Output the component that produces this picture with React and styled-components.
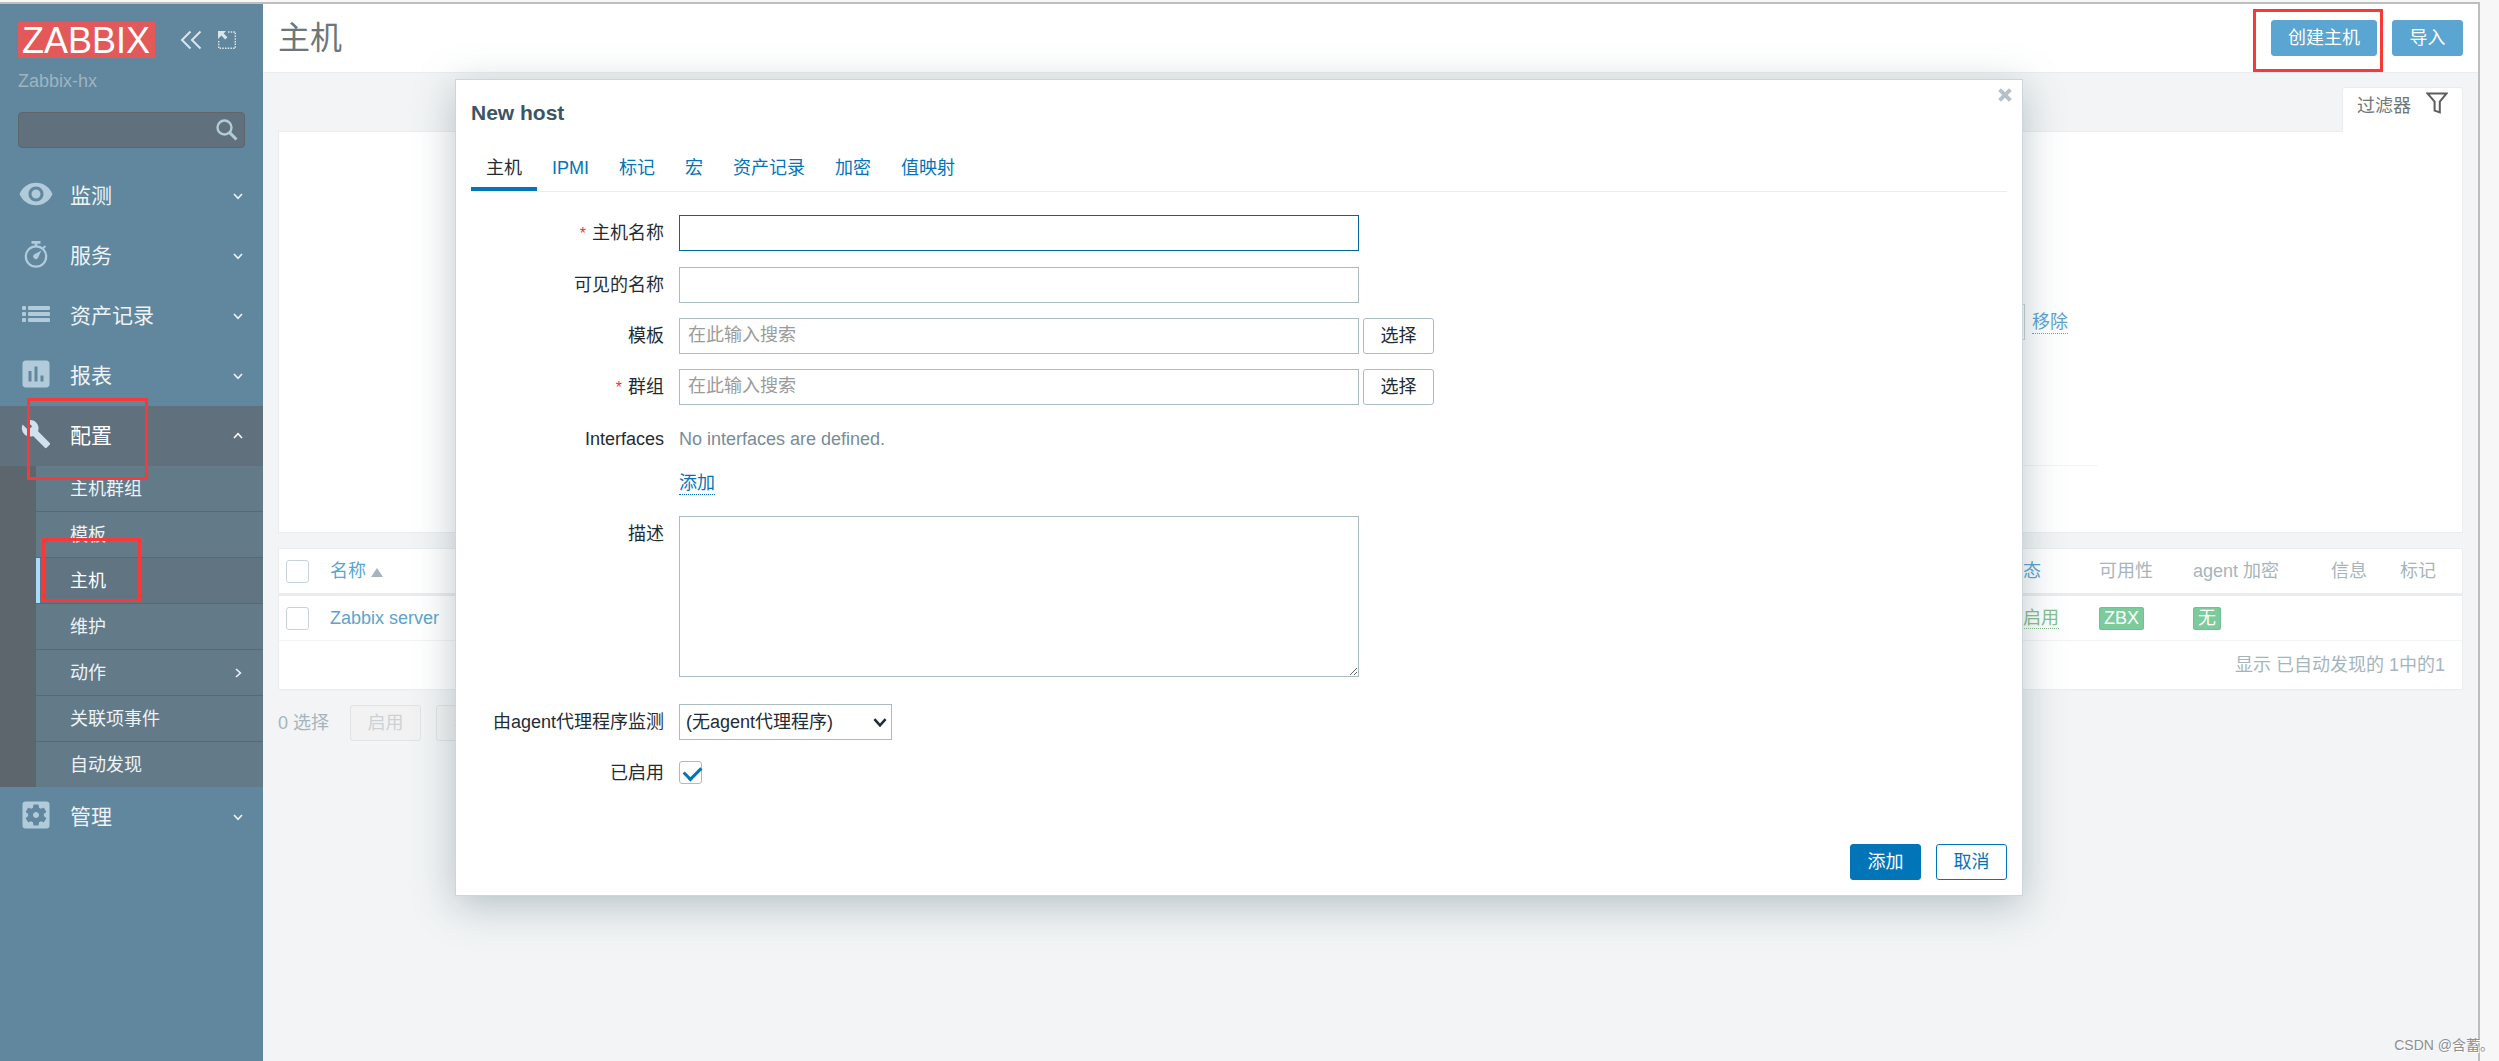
import React from 'react';
import styled, { createGlobalStyle, css } from 'styled-components';
import {
  MdVisibility,
  MdAssessment,
  MdSettingsApplications,
} from 'react-icons/md';

const GlobalStyle = createGlobalStyle`
  * {
    box-sizing: border-box;
  }

  body {
    margin: 0;
    background: #f7f7f7;
    color: #1f2c33;
    font-family: "Liberation Sans", "Noto Sans CJK SC", sans-serif;
    font-size: 18px;
    line-height: 24px;
  }

  button, input, select, textarea {
    font: inherit;
  }

  a {
    text-decoration: none;
  }
`;

const Frame = styled.div`
  position: relative;
  display: flex;
  min-height: calc(100vh - 2px);
  margin: 2px 19px 0 0;
  border-top: 2px solid #bebebe;
  border-right: 2px solid #bebebe;
  background: #f2f4f5;
`;

/* red outline drawn around its positioned parent */
const Marker = styled.span`
  position: absolute;
  z-index: 1;
  top: ${props => props.$top}px;
  left: ${props => props.$left}px;
  width: ${props => props.$width}px;
  height: ${props => props.$height}px;
  border: 3px solid #fb3838;
  pointer-events: none;
`;

/* sidebar */

const Sidebar = styled.aside`
  flex: 0 0 263px;
  min-width: 0;
  padding-top: 18px;
  background: #60879e;
`;

const SidebarTop = styled.div`
  padding: 0 18px;
`;

const LogoRow = styled.div`
  display: flex;
  align-items: center;
`;

const Logo = styled.a`
  width: 137px;
  height: 36px;
  padding-left: 4px;
  background: #e35959;
  color: #fff;
  font-size: 36px;
  line-height: 37px;
`;

const IconButton = styled.button`
  display: flex;
  margin-left: ${props => props.$gap}px;
  padding: 0;
  border: 0;
  background: none;
  color: #dbe6ec;
`;

const ServerName = styled.div`
  margin-top: 12px;
  line-height: 22px;
  color: #9db5c2;
`;

const SearchBox = styled.div`
  display: flex;
  align-items: center;
  height: 36px;
  margin: 20px 0 18px;
  padding-right: 6px;
  border: 1px solid #5d666c;
  border-radius: 4px;
  background: #60717d;
`;

const SearchInput = styled.input`
  flex: 1;
  min-width: 0;
  height: 34px;
  padding: 0 8px;
  border: 0;
  outline: 0;
  background: none;
  color: #fff;
`;

const MenuList = styled.ul`
  margin: 0;
  padding: 0;
  list-style: none;
`;

const MenuItem = styled.li`
  position: relative;
`;

const MenuButton = styled.button`
  display: flex;
  align-items: center;
  width: 100%;
  height: 60px;
  padding: 0 20px 0 18px;
  border: 0;
  background: ${props => (props.$open ? '#60717d' : 'none')};
  color: ${props => (props.$open ? '#fff' : '#edf3f6')};
  font-size: 21px;
  text-align: left;
`;

const MenuIcon = styled.span`
  display: flex;
  margin-right: 16px;
  padding-bottom: 4px;
  color: ${props => (props.$open ? '#d0e2ef' : '#b1cbdb')};
`;

const MenuText = styled.span`
  flex: 1;
`;

const SubMenu = styled(MenuList)`
  padding-left: 36px;
  background: #5d666c;
`;

const SubItem = styled(MenuItem)`
  border-top: 1px solid #566a76;

  &:first-child {
    border-top: 0;
  }
`;

const SubLink = styled.a`
  display: flex;
  align-items: center;
  height: 45px;
  padding: 0 20px 0 34px;
  background: #637a89;
  color: #edf3f6;

  ${props => props.$selected && css`
    padding-left: 30px;
    border-left: 4px solid #a8dcff;
    background: #607482;
    color: #fff;
  `}
`;

/* page */

const Main = styled.main`
  flex: 1;
  min-width: 0;
`;

const Header = styled.header`
  display: flex;
  align-items: flex-start;
  justify-content: space-between;
  height: 69px;
  padding: 16px 15px 0;
  border-bottom: 1px solid #eaedef;
  background: #fff;
`;

const Title = styled.h1`
  margin: 0;
  color: #6d767a;
  font-size: 32px;
  font-weight: normal;
  line-height: 36px;
`;

const ButtonRow = styled.div`
  display: flex;
  align-items: center;
  gap: 15px;
`;

const Anchor = styled.div`
  position: relative;
`;

const looks = {
  faded: css`
    border-color: #5aa5d1;
    background: #5aa5d1;
    color: #fff;
  `,
  primary: css`
    border-color: #0275b8;
    background: #0275b8;
    color: #fff;
  `,
  outline: css`
    border-color: #0275b8;
    background: #fff;
    color: #0275b8;
  `,
  plain: css`
    border-color: #acbbc2;
    background: #fff;
    color: #1f2c33;
  `,
  disabled: css`
    border-color: #dfe4e7;
    background: #f2f2f2;
    color: #cbd2d6;
  `,
};

const Button = styled.button`
  display: block;
  min-width: 71px;
  height: 36px;
  padding: 0 16px;
  border: 1px solid;
  border-radius: 3px;
  line-height: 32px;
  white-space: nowrap;
  ${props => looks[props.$look]}
`;

const Content = styled.div`
  padding: 14px 15px;
`;

const FilterTab = styled.button`
  position: relative;
  display: flex;
  gap: 15px;
  height: 45px;
  margin: 0 0 -1px auto;
  padding: 4px 14px 0;
  border: 1px solid #eaedef;
  border-bottom: 0;
  border-radius: 3px 3px 0 0;
  background: #fff;
  color: #6d767a;
  line-height: 28px;
`;

const FilterPanel = styled.section`
  padding: 172px 0 66px;
  border: 1px solid #eaedef;
  background: #fff;
`;

const FilterForm = styled.div`
  max-width: 1455px;
  margin: 0 auto;
  border-bottom: 1px solid #f2f4f5;
`;

const TagRow = styled.div`
  display: flex;
  align-items: center;
  justify-content: flex-end;
  gap: 7px;
  padding: 0 30px 125px 0;
`;

const TagInput = styled.input`
  width: 300px;
  height: 36px;
  border: 1px solid #c9d3d7;
  background: #fff;
`;

const colours = {
  link: '#0275b8',
  faded: '#5aa5d1',
  green: '#84c088',
};

const DottedLink = styled.a`
  border-bottom: 1px dotted;
  color: ${props => colours[props.$colour]};
  line-height: 22px;
`;

const HostTable = styled.table`
  width: 100%;
  margin-top: 15px;
  border: 1px solid #eaedef;
  border-spacing: 0;
  background: #fff;
  table-layout: fixed;
`;

const Th = styled.th`
  width: ${props => (props.$width ? `${props.$width}px` : 'auto')};
  height: 47px;
  padding: 0 6px;
  border-bottom: 3px solid #eaedef;
  color: #a6b5bd;
  font-weight: normal;
  text-align: left;
  white-space: nowrap;
`;

const Td = styled.td`
  height: 45px;
  padding: 0 6px;
  border-bottom: 1px solid #f2f4f5;
  color: #a6b5bd;
`;

const TableFooter = styled.td`
  height: 48px;
  padding: 0 17px;
  color: #a6b5bd;
  text-align: right;
`;

const TableLink = styled.a`
  color: #5aa5d1;
`;

const SortArrow = styled.span`
  display: inline-block;
  margin-left: 5px;
  border: 6px solid transparent;
  border-top: 0;
  border-bottom: 9px solid #a6b5bd;
`;

const Badge = styled.span`
  display: inline-block;
  height: 23px;
  padding: 0 5px;
  border-radius: 3px;
  box-shadow: inset 0 0 0 1px #72c094;
  background: #7bcb9c;
  color: #fff;
  line-height: 23px;
  vertical-align: middle;
`;

const CheckBox = styled.input`
  display: block;
  width: 23px;
  height: 23px;
  margin: ${props => (props.$inTable ? '0 1px' : '6px 0 0')};
  border: 1px solid ${props => (props.$inTable ? '#c9d3d7' : '#acbbc2')};
  border-radius: 3px;
  background: #fff;
  appearance: none;

  /* the tick */
  &:checked::after {
    content: '';
    display: block;
    width: 14px;
    height: 8px;
    margin: 4px 0 0 4px;
    border: solid #0275b8;
    border-width: 0 0 3px 3px;
    transform: rotate(-45deg);
  }
`;

const Actions = styled.div`
  display: flex;
  align-items: center;
  gap: 15px;
  margin-top: 15px;
`;

const SelectedCount = styled.span`
  margin-right: 6px;
  color: #a6b5bd;
`;

/* dialog */

const Overlay = styled.div`
  position: absolute;
  inset: 0;
  display: flex;
  align-items: flex-start;
  justify-content: center;
  padding: 75px 16px;
  pointer-events: none;
`;

const Dialog = styled.section`
  position: relative;
  width: 100%;
  max-width: 1568px;
  padding: 21px 15px 15px;
  border: 1px solid #ccd5d9;
  box-shadow: 0 9px 38px rgba(65, 95, 110, 0.35);
  background: #fff;
  pointer-events: auto;
`;

const CloseButton = styled.button`
  position: absolute;
  top: 8px;
  right: 10px;
  display: flex;
  padding: 0;
  border: 0;
  background: none;
  color: #b5c2c8;
`;

const DialogTitle = styled.h2`
  margin: 0;
  color: #3c5563;
  font-size: 21px;
  line-height: 24px;
`;

const Tabs = styled.nav`
  display: flex;
  margin: 20px 0 23px;
  border-bottom: 1px solid #ebeef0;
`;

const Tab = styled.a`
  padding: 0 15px;
  color: #0275b8;
  line-height: 46px;

  ${props => props.$active && css`
    box-shadow: inset 0 -4px #0275b8;
    color: #1f2c33;
  `}
`;

const FormGrid = styled.form`
  display: grid;
  grid-template-columns: 193px minmax(0, 1fr);
  gap: 15px;
`;

const Label = styled.label`
  line-height: 36px;
  text-align: right;
  white-space: nowrap;
`;

const Required = styled.span`
  margin-right: 6px;
  color: #e33734;
  font-size: 16px;
`;

const Field = styled.div`
  display: flex;
  gap: 4px;
`;

const TextInput = styled.input`
  width: 680px;
  height: 36px;
  padding: 0 8px 2px;
  border: 1px solid ${props => (props.$current ? '#02659f' : '#acbbc2')};
  outline: 0;
  background: #fff;

  &::placeholder {
    color: #9b9b9b;
  }
`;

const TextArea = styled.textarea`
  display: block;
  width: 680px;
  height: 161px;
  margin-bottom: 12px;
  border: 1px solid #acbbc2;
  outline: 0;
`;

const Interfaces = styled.div`
  display: grid;
  justify-items: start;
  gap: 8px;
`;

const Note = styled.span`
  color: #768d99;
  line-height: 36px;
`;

const LinkLine = styled.div`
  display: flex;
  align-items: center;
  height: 36px;
`;

const SelectBox = styled.div`
  position: relative;
  width: 213px;
`;

const Select = styled.select`
  width: 100%;
  height: 36px;
  padding: 0 30px 0 6px;
  border: 1px solid #acbbc2;
  background: #fff;
  color: #1f2c33;
  appearance: none;
`;

const SelectArrow = styled.span`
  position: absolute;
  top: 11px;
  right: 5px;
  display: flex;
  color: #1f2c33;
  pointer-events: none;
`;

const DialogFooter = styled.footer`
  display: flex;
  justify-content: flex-end;
  gap: 15px;
  margin-top: 53px;
`;

const Watermark = styled.div`
  position: absolute;
  right: -16px;
  bottom: 6px;
  color: #8f8f8f;
  font-size: 14px;
  line-height: 20px;
  text-shadow: 1px 1px #fff;
  white-space: nowrap;
`;

/* icons */

const Chevron = ({ turn = 0, width = 10, stroke = 1.6 }) => (
  <svg width={width} height={width} viewBox="0 0 10 10" fill="none" stroke="currentColor" strokeWidth={stroke}>
    <path d="M1 3 L5 7.4 L9 3" transform={`rotate(${turn} 5 5)`} />
  </svg>
);

const CollapseIcon = () => (
  <svg width="22" height="20" viewBox="0 0 22 20" fill="none" stroke="currentColor" strokeWidth="2">
    <path d="M10.5 1.5 L2 10 L10.5 18.5 M20.5 1.5 L12 10 L20.5 18.5" />
  </svg>
);

const KioskIcon = () => (
  <svg width="18" height="18" viewBox="0 0 18 18">
    <path
      d="M10 1 H17.3 V17.3 H0.7 V9"
      fill="none"
      stroke="currentColor"
      strokeWidth="1.4"
      strokeDasharray="1.5 1.2"
    />
    <path d="M0 0 H8 L5.6 2.4 L9.4 6.2 L7.2 8.4 L3.4 4.6 L0 8 Z" fill="currentColor" />
  </svg>
);

const SearchIcon = () => (
  <svg width="22" height="22" viewBox="0 0 22 22" fill="none" stroke="#b1cbdb">
    <circle cx="8.5" cy="8.5" r="7" strokeWidth="2.4" />
    <path d="M13.4 13.4 L20.5 20.5" strokeWidth="3" />
  </svg>
);

const StopwatchIcon = () => (
  <svg width="36" height="36" viewBox="0 0 36 36" fill="none" stroke="currentColor">
    <circle cx="18" cy="20.5" r="10.2" strokeWidth="2.2" />
    <path d="M13.5 6.4 H22.5 M18 6 V10" strokeWidth="2.6" />
    <path d="M25 12.4 L27.4 10" strokeWidth="2" />
    <path d="M23.4 14.6 L19.8 22.2 A2.6 2.6 0 1 1 16 18.6 Z" fill="currentColor" stroke="none" />
  </svg>
);

const ListIcon = () => (
  <svg width="36" height="36" viewBox="0 0 36 36" fill="currentColor">
    {[10, 16, 22].map(y => (
      <g key={y}>
        <rect x="4" y={y} width="4" height="4" rx="1" />
        <rect x="10" y={y} width="22" height="4" rx="1" />
      </g>
    ))}
  </svg>
);

const WrenchIcon = () => (
  <svg width="36" height="36" viewBox="-2 -2 28 28" fill="currentColor">
    <path d="M22.7 19l-9.1-9.1c.9-2.3.4-5-1.5-6.9-2-2-5-2.4-7.4-1.3L9 6 6 9 1.6 4.7C.4 7.1.9 10.1 2.9 12.1c1.9 1.9 4.6 2.4 6.9 1.5l9.1 9.1c.4.4 1 .4 1.4 0l2.3-2.3c.5-.4.5-1.1.1-1.4z" />
  </svg>
);

const FilterIcon = () => (
  <svg width="22" height="22" viewBox="0 0 22 22" fill="none" stroke="#5c5c5c" strokeWidth="2">
    <path d="M1.6 1.6 H20.4 L13.8 9.6 V20.4 L8.6 18.6 V9.6 Z" />
  </svg>
);

const CloseIcon = () => (
  <svg width="14" height="14" viewBox="0 0 14 14" stroke="currentColor" strokeWidth="4">
    <path d="M1.6 1.6 L12.4 12.4 M12.4 1.6 L1.6 12.4" />
  </svg>
);

const menu = [
  { name: '监测', icon: <MdVisibility size={36} /> },
  { name: '服务', icon: <StopwatchIcon /> },
  { name: '资产记录', icon: <ListIcon /> },
  { name: '报表', icon: <MdAssessment size={36} /> },
  {
    name: '配置',
    icon: <WrenchIcon />,
    items: [
      { name: '主机群组' },
      { name: '模板' },
      { name: '主机', selected: true },
      { name: '维护' },
      { name: '动作', more: true },
      { name: '关联项事件' },
      { name: '自动发现' },
    ],
  },
  { name: '管理', icon: <MdSettingsApplications size={36} /> },
];

const tabs = ['主机', 'IPMI', '标记', '宏', '资产记录', '加密', '值映射'];

const SideMenu = () => (
  <Sidebar>
    <SidebarTop>
      <LogoRow>
        <Logo href="#">ZABBIX</Logo>
        <IconButton type="button" $gap={25} aria-label="收起"><CollapseIcon /></IconButton>
        <IconButton type="button" $gap={16} aria-label="全屏"><KioskIcon /></IconButton>
      </LogoRow>
      <ServerName>Zabbix-hx</ServerName>
      <SearchBox>
        <SearchInput type="text" aria-label="搜索" />
        <SearchIcon />
      </SearchBox>
    </SidebarTop>
    <nav>
      <MenuList>
        {menu.map(({ name, icon, items }) => (
          <MenuItem key={name}>
            <MenuButton type="button" $open={Boolean(items)}>
              <MenuIcon $open={Boolean(items)}>{icon}</MenuIcon>
              <MenuText>{name}</MenuText>
              <Chevron turn={items ? 180 : 0} />
            </MenuButton>
            {items && (
              <SubMenu>
                {items.map(item => (
                  <SubItem key={item.name}>
                    <SubLink href="#" $selected={item.selected}>
                      <MenuText>{item.name}</MenuText>
                      {item.more && <Chevron turn={-90} />}
                    </SubLink>
                    {item.selected && <Marker $top={-20} $left={6} $width={99} $height={64} />}
                  </SubItem>
                ))}
              </SubMenu>
            )}
            {items && <Marker $top={-8} $left={27} $width={121} $height={82} />}
          </MenuItem>
        ))}
      </MenuList>
    </nav>
  </Sidebar>
);

const Hosts = () => (
  <HostTable>
    <thead>
      <tr>
        <Th $width={45}><CheckBox type="checkbox" $inTable aria-label="全选" /></Th>
        <Th><TableLink href="#">名称<SortArrow /></TableLink></Th>
        <Th $width={94}><TableLink href="#">状态</TableLink></Th>
        <Th $width={94}>可用性</Th>
        <Th $width={138}>agent 加密</Th>
        <Th $width={69}>信息</Th>
        <Th $width={68}>标记</Th>
      </tr>
    </thead>
    <tbody>
      <tr>
        <Td><CheckBox type="checkbox" $inTable aria-label="Zabbix server" /></Td>
        <Td><TableLink href="#">Zabbix server</TableLink></Td>
        <Td><DottedLink href="#" $colour="green">已启用</DottedLink></Td>
        <Td><Badge>ZBX</Badge></Td>
        <Td><Badge>无</Badge></Td>
        <Td />
        <Td />
      </tr>
      <tr>
        <TableFooter colSpan={7}>显示 已自动发现的 1中的1</TableFooter>
      </tr>
    </tbody>
  </HostTable>
);

const NewHostDialog = () => (
  <Overlay>
    <Dialog role="dialog" aria-labelledby="dialog-title">
      <CloseButton type="button" aria-label="关闭"><CloseIcon /></CloseButton>
      <DialogTitle id="dialog-title">New host</DialogTitle>
      <Tabs>
        {tabs.map((tab, index) => (
          <Tab key={tab} href="#" $active={index === 0}>{tab}</Tab>
        ))}
      </Tabs>
      <FormGrid>
        <Label htmlFor="host"><Required>*</Required>主机名称</Label>
        <Field><TextInput id="host" type="text" $current /></Field>

        <Label htmlFor="visible-name">可见的名称</Label>
        <Field><TextInput id="visible-name" type="text" /></Field>

        <Label htmlFor="templates">模板</Label>
        <Field>
          <TextInput id="templates" type="text" placeholder="在此输入搜索" />
          <Button type="button" $look="plain">选择</Button>
        </Field>

        <Label htmlFor="groups"><Required>*</Required>群组</Label>
        <Field>
          <TextInput id="groups" type="text" placeholder="在此输入搜索" />
          <Button type="button" $look="plain">选择</Button>
        </Field>

        <Label as="span">Interfaces</Label>
        <Interfaces>
          <Note>No interfaces are defined.</Note>
          <LinkLine><DottedLink href="#" $colour="link">添加</DottedLink></LinkLine>
        </Interfaces>

        <Label htmlFor="description">描述</Label>
        <Field><TextArea id="description" /></Field>

        <Label htmlFor="proxy">由agent代理程序监测</Label>
        <SelectBox>
          <Select id="proxy">
            <option>(无agent代理程序)</option>
          </Select>
          <SelectArrow><Chevron width={14} stroke={1.8} /></SelectArrow>
        </SelectBox>

        <Label htmlFor="enabled">已启用</Label>
        <Field><CheckBox id="enabled" type="checkbox" defaultChecked /></Field>
      </FormGrid>
      <DialogFooter>
        <Button type="button" $look="primary">添加</Button>
        <Button type="button" $look="outline">取消</Button>
      </DialogFooter>
    </Dialog>
  </Overlay>
);

const App = () => (
  <>
    <GlobalStyle />
    <Frame>
      <SideMenu />
      <Main>
        <Header>
          <Title>主机</Title>
          <ButtonRow>
            <Anchor>
              <Button type="button" $look="faded">创建主机</Button>
              <Marker $top={-11} $left={-18} $width={130} $height={63} />
            </Anchor>
            <Button type="button" $look="faded">导入</Button>
          </ButtonRow>
        </Header>
        <Content>
          <FilterTab type="button">
            过滤器
            <FilterIcon />
          </FilterTab>
          <FilterPanel>
            <FilterForm>
              <TagRow>
                <TagInput type="text" aria-label="标记" />
                <DottedLink href="#" $colour="faded">移除</DottedLink>
              </TagRow>
            </FilterForm>
          </FilterPanel>
          <Hosts />
          <Actions>
            <SelectedCount>0 选择</SelectedCount>
            <Button type="button" $look="disabled" disabled>启用</Button>
            <Button type="button" $look="disabled" disabled>禁用</Button>
          </Actions>
        </Content>
      </Main>
      <NewHostDialog />
      <Watermark>CSDN @含蓄。</Watermark>
    </Frame>
  </>
);

export default App;
